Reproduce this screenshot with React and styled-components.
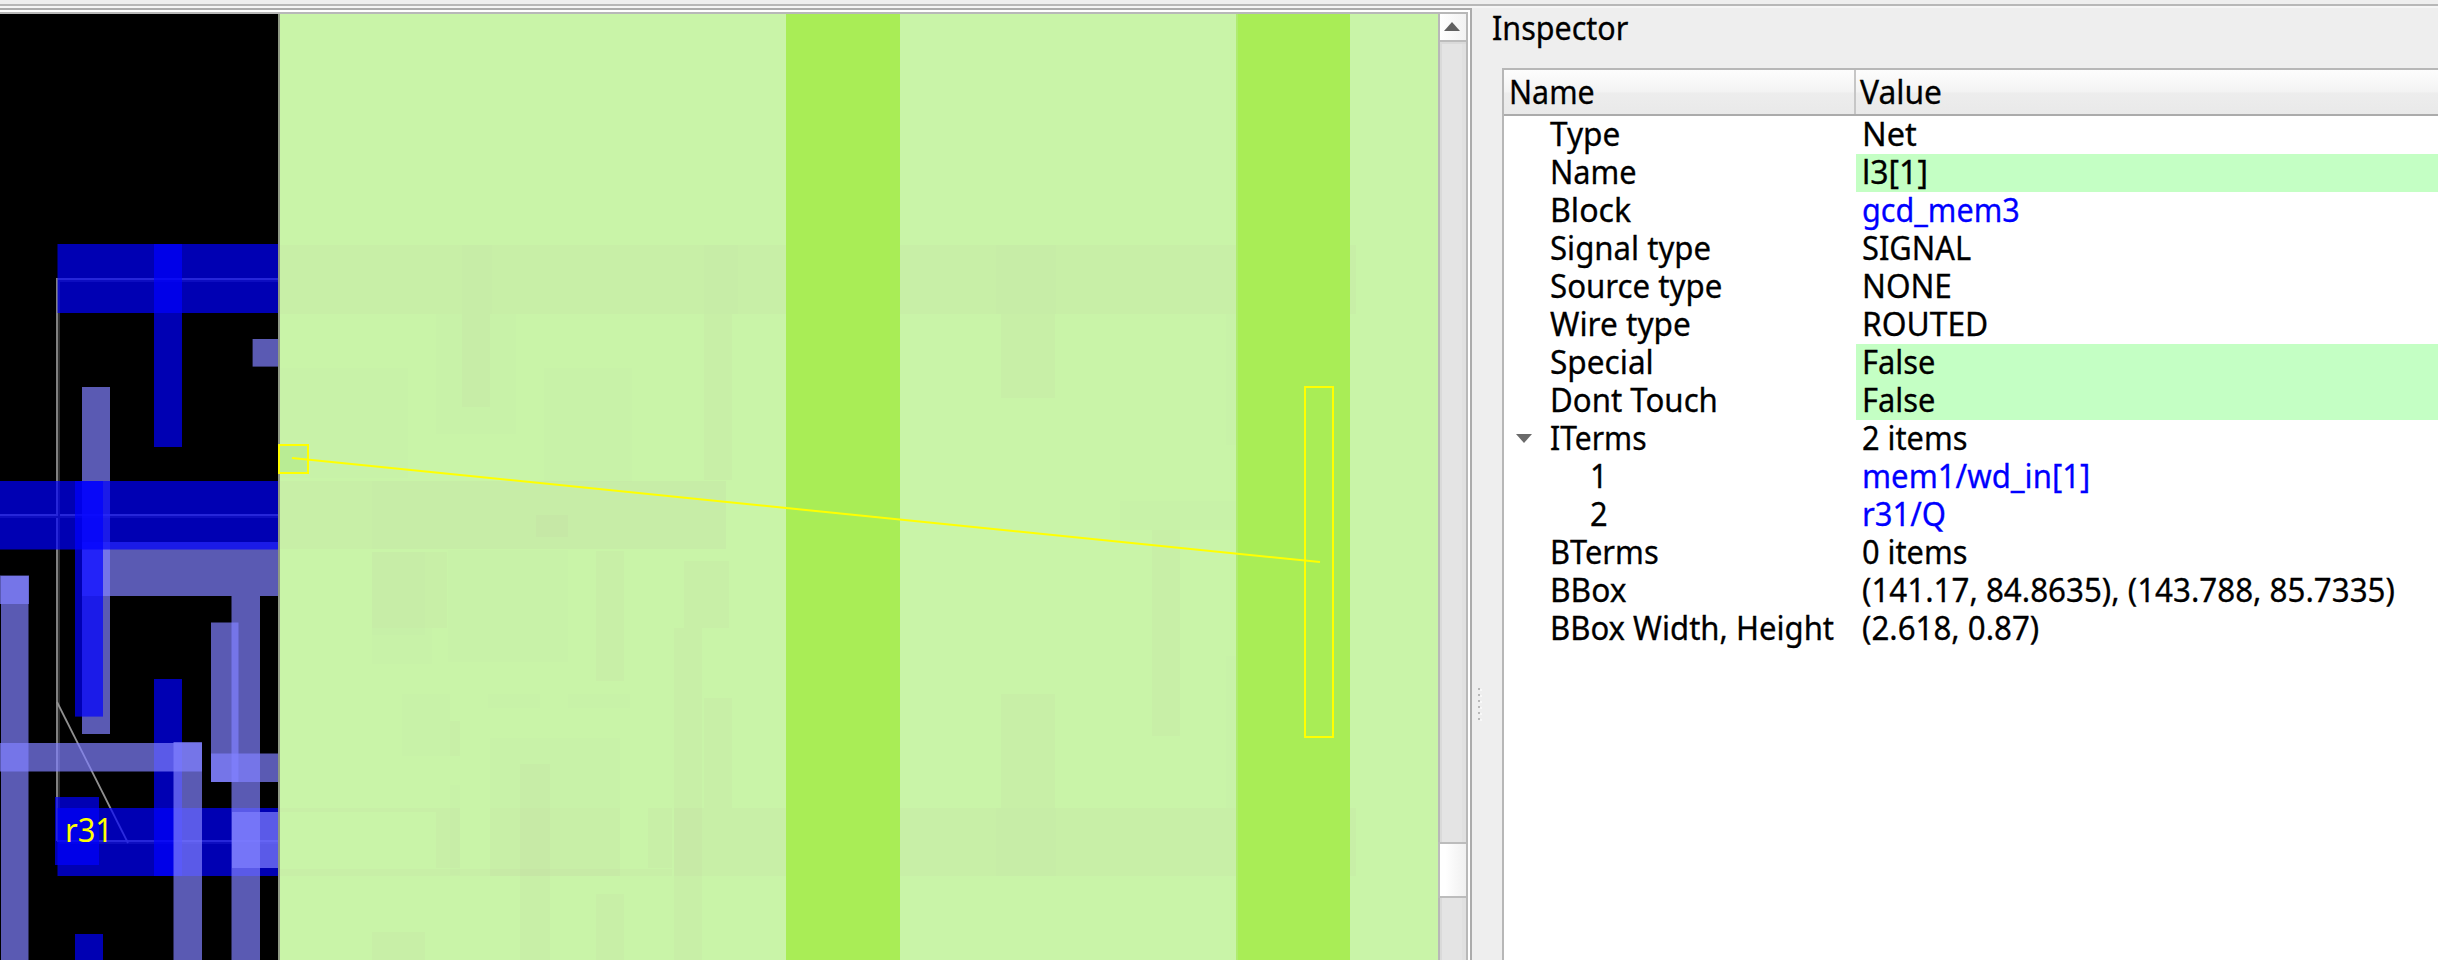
import React, { useLayoutEffect, useRef, useState } from 'react';
import styled, { createGlobalStyle } from 'styled-components';

const GlobalStyle = createGlobalStyle`
  * { box-sizing: border-box; }
  body {
    margin: 0;
    background: #eeeeee;
    color: #000;
    font-family: "Noto Sans", "Open Sans", sans-serif;
    font-size: 32.5px;
    -webkit-text-stroke: 0.3px currentColor;
    overflow: hidden;
  }
`;

const Window = styled.div`
  width: 2438px;
  height: 960px;
  display: flex;
  flex-direction: column;
  overflow: hidden;
`;

const TopEdge = styled.div`
  flex: none;
  height: 8px;
  border-top: 4px solid #eeeeee;
  background: linear-gradient(#b7b7b7 50%, #f5f5f5 50%);
`;

const Body = styled.div`
  flex: 1;
  min-height: 0;
  display: flex;
`;

const ViewFrame = styled.div`
  flex: none;
  width: 1472px;
  display: flex;
  border: solid #ababab;
  border-width: 2px 2px 0 0;
  background: #fff;
  padding: 2px 2px 0 0;
`;

const View = styled.div`
  flex: 1;
  display: flex;
  border: solid #b8b8b8;
  border-width: 2px 2px 0 0;
`;

const Canvas = styled.svg`
  display: block;
  flex: none;
  background: #000;
`;

const ScrollBar = styled.div`
  width: 28px;
  display: flex;
  flex-direction: column;
  border-left: 2px solid #b8b8b8;
  background: linear-gradient(90deg, #dadada 0 2px, #e4e4e4 2px 22px, #e0e0e0 22px);
`;

const ScrollButton = styled.div`
  height: 28px;
  display: flex;
  justify-content: center;
  padding-top: 8px;
  padding-right: 3px;
  border-bottom: 2px solid #bcbcbc;
  background: linear-gradient(90deg, #ffffff, #f2f2f2);
`;

const ScrollTrack = styled.div`
  height: 800px;
  border-top: 2px solid #dadada;
`;

const ScrollThumb = styled.div`
  height: 56px;
  margin-left: -2px;
  border: solid #bcbcbc;
  border-width: 2px 0 2px 2px;
  background: linear-gradient(90deg, #ffffff 20%, #f0f0f0);
`;

const Splitter = styled.div`
  flex: none;
  width: 18px;
  display: flex;
  flex-direction: column;
  align-items: flex-start;
  gap: 4px;
  padding: 680px 0 0 6px;
`;

const GripDot = styled.div`
  width: 2px;
  height: 2px;
  background: #b8b8b8;
  box-shadow: 2px 1px 0 #f8f8f8;
`;

const Inspector = styled.div`
  flex: 1;
  min-width: 0;
  display: flex;
  flex-direction: column;
`;

const Title = styled.div`
  flex: none;
  height: 60px;
  padding-left: 2px;
  line-height: 40px;
`;

const Tree = styled.div`
  flex: 1;
  margin-left: 12px;
  border: solid #b7b7b7;
  border-width: 2px 0 0 2px;
  background: #fff;
`;

const Header = styled.div`
  display: grid;
  grid-template-columns: 352px 1fr;
  height: 46px;
  border-bottom: 2px solid #ababab;
  background: linear-gradient(#fdfdfd, #f3f3f3 50%, #ededed 52%, #e9e9e9);
`;

const HeaderCell = styled.div`
  padding-left: ${(p) => (p.$divided ? 4.5 : 4)}px;
  line-height: 43px;
  border-right: ${(p) => (p.$divided ? '2px solid #c6c6c6' : '0')};
`;

const Row = styled.div`
  display: grid;
  grid-template-columns: 352px 1fr;
  height: 38px;
  line-height: 36px;
`;

const NameCell = styled.div`
  display: flex;
  padding-left: ${(p) => (p.$level ? 86 : p.$open ? 12 : 46)}px;
`;

const ValueCell = styled.div`
  padding-left: 6px;
  color: ${(p) => (p.$link ? '#0000ff' : '#000')};
  background: ${(p) => (p.$editable ? '#c4ffc4' : 'transparent')};
`;

const Expander = styled.svg`
  width: 16px;
  height: 9px;
  margin: 14px 18px 0 0;
`;

const Ink = styled.span`
  display: inline-block;
  white-space: pre;
  transform-origin: 0 50%;
`;

function Label({ width, children }) {
  const ref = useRef(null);
  const [scale, setScale] = useState(1);
  useLayoutEffect(() => {
    setScale(width / ref.current.offsetWidth);
  }, [width, children]);
  return (
    <Ink ref={ref} style={{ transform: `scaleX(${scale})` }}>
      {children}
    </Ink>
  );
}

const B = 'rgba(0,0,255,0.7)';
const V = 'rgba(128,128,255,0.7)';

/* Routing shapes in drawing order: fill, x, y, width, height. */
const shapes = [
  [V, 82, 387, 28, 347],
  [V, 82, 542, 198, 54],
  [V, 252.6, 339, 27, 27.6],
  [V, 0, 575.5, 29, 28.5],
  [V, 1, 576, 27.5, 384],
  [B, 57.5, 244, 222, 69],
  [B, 154, 244, 28, 203],
  [B, 0, 481, 280, 68.5],
  [B, 75, 481, 28, 235.6],
  [B, 154, 679, 28, 197],
  [B, 57.5, 808, 222, 68],
  [B, 55, 797, 44, 68],
  [B, 75, 934, 28, 26],
  [V, 0, 743, 202, 28.5],
  [V, 173.5, 742, 28.5, 218],
  [V, 231.5, 596, 28.5, 364],
  [V, 211, 622.5, 27.5, 159.5],
  [V, 211, 753.5, 69, 28.5],
  [V, 232, 812, 48, 56],
];

const W = 'rgba(202,160,165,0.05)';
const F = 'rgba(190,200,165,0.035)';

/* Routing that shows faintly through the macro. */
const ghosts = [
  [W, 280, 245, 1076, 69], [F, 462, 245, 30, 69], [F, 704, 245, 34, 69], [F, 996, 245, 60, 69],
  [W, 462, 314, 28, 93], [W, 704, 314, 28, 166], [W, 1001, 314, 54, 84], [F, 1226, 314, 28, 131],
  [F, 436, 314, 80, 120], [F, 544, 368, 88, 114], [F, 280, 368, 128, 110],
  [W, 280, 481, 92, 68], [W, 372, 481, 354, 68], [F, 372, 481, 354, 68], [W, 536, 515, 32, 22],
  [W, 372, 552, 75, 76], [F, 372, 552, 53, 83], [F, 448, 550, 120, 112], [W, 596, 551, 28, 130],
  [W, 684, 561, 45, 67], [W, 674, 628, 28, 332], [W, 704, 698, 28, 110],
  [F, 372, 628, 60, 36], [F, 402, 694, 48, 62], [W, 450, 721, 10, 35], [F, 488, 694, 52, 14],
  [F, 568, 694, 62, 14], [F, 490, 738, 130, 70], [W, 520, 764, 30, 196],
  [W, 436, 812, 24, 56], [F, 450, 785, 10, 90], [W, 490, 808, 130, 68], [W, 648, 808, 24, 60],
  [W, 280, 808, 180, 4], [W, 280, 869, 392, 7], [W, 674, 808, 62, 68], [W, 736, 808, 620, 68],
  [F, 996, 808, 60, 68], [W, 596, 894, 28, 66], [W, 372, 932, 53, 28],
  [W, 1152, 530, 28, 206], [W, 1001, 694, 54, 114], [F, 1226, 656, 28, 152],
  [F, 1120, 501, 130, 29],
];

function Rects({ items }) {
  return items.map(([fill, x, y, width, height], i) => (
    <rect key={i} fill={fill} x={x} y={y} width={width} height={height} />
  ));
}

function Layout() {
  return (
    <Canvas width="1438" height="946" viewBox="0 14 1438 946">
      <g fill="none" stroke="#808080" strokeWidth="2">
        <path d="M57 841V279H280M57 841H280M0 515H280" />
        <path d="M59 280V840M59 281H280M0 517H280M59 843H280" stroke="#2e2e2e" />
        <path d="M57 702L128 843" stroke="#909090" strokeWidth="1.8" />
      </g>
      <Rects items={shapes} />
      <text x="65" y="842" fill="#ffff00" fontSize="32.5" textLength="48" lengthAdjust="spacingAndGlyphs">
        r31
      </text>
      <rect x="278" y="14" width="2" height="946" fill="#8f9a84" />
      <rect x="280" y="14" width="1158" height="946" fill="#c9f4a8" />
      <Rects items={ghosts} />
      <rect x="786" y="14" width="114" height="946" fill="#a9ed56" />
      <rect x="1236" y="14" width="2" height="946" fill="#b0ec70" />
      <rect x="1238" y="14" width="112" height="946" fill="#a9ed56" />
      <g fill="none" stroke="#ffff00" strokeWidth="2">
        <rect x="279" y="445" width="29" height="28" fill="#b9ec94" />
        <rect x="1305" y="387" width="28" height="350" />
        <path d="M292 458L1320 562" />
      </g>
    </Canvas>
  );
}

const rows = [
  { name: 'Type', nw: 70, value: 'Net', vw: 55 },
  { name: 'Name', nw: 87, value: 'l3[1]', vw: 66, editable: true },
  { name: 'Block', nw: 81, value: 'gcd_mem3', vw: 158, link: true },
  { name: 'Signal type', nw: 161, value: 'SIGNAL', vw: 109 },
  { name: 'Source type', nw: 172, value: 'NONE', vw: 90 },
  { name: 'Wire type', nw: 141, value: 'ROUTED', vw: 126 },
  { name: 'Special', nw: 104, value: 'False', vw: 73, editable: true },
  { name: 'Dont Touch', nw: 168, value: 'False', vw: 73, editable: true },
  { name: 'ITerms', nw: 97, value: '2 items', vw: 105, open: true },
  { name: '1', nw: 18, value: 'mem1/wd_in[1]', vw: 228, link: true, level: 1 },
  { name: '2', nw: 18, value: 'r31/Q', vw: 84, link: true, level: 1 },
  { name: 'BTerms', nw: 109, value: '0 items', vw: 105 },
  { name: 'BBox', nw: 76, value: '(141.17, 84.8635), (143.788, 85.7335)', vw: 533 },
  { name: 'BBox Width, Height', nw: 284, value: '(2.618, 0.87)', vw: 177 },
];

export default function App() {
  return (
    <Window>
      <GlobalStyle />
      <TopEdge />
      <Body>
        <ViewFrame>
          <View>
            <Layout />
            <ScrollBar>
              <ScrollButton>
                <svg width="16" height="9" viewBox="0 0 16 9">
                  <path d="M8 0L16 9H0Z" fill="#606060" />
                </svg>
              </ScrollButton>
              <ScrollTrack />
              <ScrollThumb />
            </ScrollBar>
          </View>
        </ViewFrame>
        <Splitter>
          {[0, 1, 2, 3, 4, 5].map((i) => (
            <GripDot key={i} />
          ))}
        </Splitter>
        <Inspector>
          <Title>
            <Label width={136}>Inspector</Label>
          </Title>
          <Tree>
            <Header>
              <HeaderCell $divided>
                <Label width={86}>Name</Label>
              </HeaderCell>
              <HeaderCell>
                <Label width={82}>Value</Label>
              </HeaderCell>
            </Header>
            {rows.map((r) => (
              <Row key={r.name}>
                <NameCell $level={r.level} $open={r.open}>
                  {r.open && (
                    <Expander viewBox="0 0 16 9">
                      <path d="M0 0H16L8 9Z" fill="#6a6a6a" />
                    </Expander>
                  )}
                  <Label width={r.nw}>{r.name}</Label>
                </NameCell>
                <ValueCell $link={r.link} $editable={r.editable}>
                  <Label width={r.vw}>{r.value}</Label>
                </ValueCell>
              </Row>
            ))}
          </Tree>
        </Inspector>
      </Body>
    </Window>
  );
}
